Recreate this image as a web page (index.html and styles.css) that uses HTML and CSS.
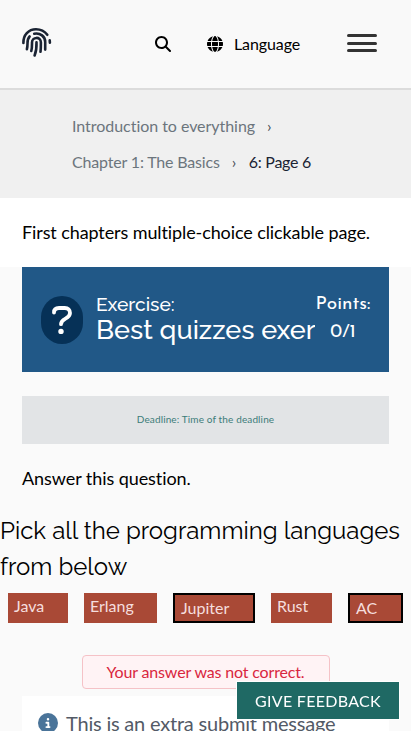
FILE: index.html
```html
<!DOCTYPE html>
<html lang="en">
<head>
<meta charset="utf-8">
<meta name="viewport" content="width=device-width, initial-scale=1">
<title>6: Page 6</title>
<link rel="stylesheet" href="styles.css">
</head>
<body>
<header class="topbar">
  <svg class="logo" viewBox="21 27 31 31" fill="none" stroke="#1a2333" stroke-width="2.6" stroke-linecap="round">
    <path d="M23.400 43C23.200 35 28.500 29.300 36 29.300c4.800 0 8.700 2.100 11.300 5.500M49.700 40.300l.2 2.300"/>
    <path d="M34.200 33.700c6.200-1.200 11 2.900 11 8.300v7.600M29.600 36.500c-2.200 2.200-2.100 4.500-2.100 7.200 0 2-.2 3.700-.6 5.600M31.300 51c.8-3 .7-5.500.7-8.500 0-6 8.800-6.200 8.900 0 0 3.400 0 6.200-.4 9.300M36.500 42.300c.2 5-.2 9-1.900 13.200"/>
  </svg>
  <svg class="search" viewBox="0 0 512 512"><path d="M416 208c0 45.9-14.9 88.3-40 122.7L502.6 457.4c12.5 12.5 12.5 32.8 0 45.3s-32.8 12.5-45.3 0L330.7 376c-34.4 25.2-76.8 40-122.7 40C93.1 416 0 322.9 0 208S93.1 0 208 0S416 93.1 416 208zM208 352a144 144 0 1 0 0-288 144 144 0 1 0 0 288z"/></svg>
  <svg class="globe" viewBox="0 0 512 512"><path d="M352 256c0 22.2-1.2 43.6-3.3 64H163.3c-2.2-20.4-3.3-41.8-3.3-64s1.2-43.6 3.3-64H348.7c2.2 20.4 3.3 41.8 3.3 64zm28.8-64H503.9c5.3 20.5 8.1 41.9 8.1 64s-2.8 43.5-8.1 64H380.8c2.1-20.6 3.2-42 3.2-64s-1.1-43.4-3.2-64zm112.6-32H376.7c-10-63.9-29.8-117.4-55.3-151.6c78.3 20.7 142 77.5 171.9 151.6zm-149.1 0H167.7c6.1-36.4 15.5-68.6 27-94.7c10.5-23.6 22.2-40.7 33.5-51.5C239.4 3.2 248.7 0 256 0s16.6 3.2 27.8 13.8c11.3 10.8 23 27.9 33.5 51.5c11.6 26 20.9 58.2 27 94.7zm-209 0H18.6C48.6 85.9 112.2 29.1 190.6 8.4C165.1 42.6 145.3 96.1 135.3 160zM8.1 192H131.2c-2.1 20.6-3.2 42-3.2 64s1.1 43.4 3.2 64H8.1C2.8 299.5 0 278.1 0 256s2.8-43.5 8.1-64zM194.7 446.6c-11.6-26-20.9-58.2-27-94.6H344.3c-6.1 36.4-15.5 68.6-27 94.6c-10.5 23.6-22.2 40.7-33.5 51.5C272.6 508.8 263.3 512 256 512s-16.6-3.2-27.8-13.8c-11.3-10.8-23-27.9-33.5-51.5zM135.3 352c10 63.9 29.8 117.4 55.3 151.6C112.2 482.9 48.6 426.1 18.6 352H135.3zm358.1 0c-30 74.1-93.6 130.9-171.9 151.6c25.5-34.2 45.2-87.7 55.3-151.6H493.4z"/></svg>
  <span class="language">Language</span>
  <div class="burger"><i></i><i></i><i></i></div>
</header>
<nav class="crumbs">
  <div class="crumb-row"><a class="course">Introduction to everything</a><span class="sep">›</span></div>
  <div class="crumb-row"><a class="chapter">Chapter 1: The Basics</a><span class="sep">›</span><a class="current">6: Page 6</a></div>
</nav>
<main>
  <p class="intro">First chapters multiple-choice clickable page.</p>
  <section class="exercise">
    <svg class="question" viewBox="0 0 42 48"><rect width="42" height="48" rx="21" fill="#063157"/><path d="M13 16.600c0-3 2-4.600 5-4.600h5.800c3.300 0 5.200 2.200 5.200 5 0 6.500-9 4.700-9 11.200" fill="none" stroke="#fff" stroke-width="3.8" stroke-linecap="round"/><circle cx="20" cy="35.4" r="2.7" fill="#fff"/></svg>
    <h2 class="title"><span class="kicker">Exercise:</span><span class="name">Best quizzes exer</span></h2>
    <div class="points"><span class="points-label">Points:</span><span class="points-value">0/1</span></div>
  </section>
  <div class="deadline">Deadline: Time of the deadline</div>
  <p class="answer">Answer this question.</p>
  <h3 class="prompt"><span>Pick all the programming languages</span> <span>from below</span></h3>
  <div class="options">
    <button class="java">Java</button>
    <button class="erlang">Erlang</button>
    <button class="jupiter selected">Jupiter</button>
    <button class="rust">Rust</button>
    <button class="ac selected">AC</button>
  </div>
  <div class="result">Your answer was not correct.</div>
  <div class="message">
    <svg class="info" viewBox="0 0 512 512"><circle cx="256" cy="256" r="256" fill="#4a7499"/><path fill="#fff" d="M216 336h24v-64h-24c-13.300 0-24-10.700-24-24s10.700-24 24-24h48c13.300 0 24 10.700 24 24v88h8c13.300 0 24 10.700 24 24s-10.700 24-24 24h-80c-13.300 0-24-10.700-24-24s10.700-24 24-24zM256 128a32 32 0 1 1 0 64 32 32 0 1 1 0-64z"/></svg>
    <span>This is an extra submit message</span>
  </div>
</main>
<button class="feedback">GIVE FEEDBACK</button>
</body>
</html>
```
FILE: styles.css
```css
* { box-sizing: border-box; }
html { height: 100%; overflow: hidden; }
body { margin: 0; height: 731px; overflow: hidden; background: #fafafa; color: #000; font: 18px/29px Lato, sans-serif; }
p, h2, h3 { margin: 0; font-weight: 400; }
button { font-family: Lato, sans-serif; }
svg { display: block; flex: none; }
.topbar { display: flex; align-items: center; height: 90px; padding: 0 34px 4px 21px; border-bottom: 2px solid #dcdcdc; background: #f9f9f9; }
.logo { width: 31px; height: 31px; margin-top: 1px; }
.search { width: 16px; height: 16px; margin: 4px 0 0 103px; }
.globe { width: 16px; height: 16px; margin: 4px 11px 0 36px; }
.language { margin-top: 3px; font-size: 16px; letter-spacing: -.1px; }
.burger { display: flex; flex-direction: column; gap: 4.500px; width: 30px; margin: 2px 0 0 auto; }
.burger i { height: 3px; border-radius: 2px; background: #333; }
.crumbs { height: 108px; padding: 18px 72px; background: #f0f0f0; color: #6c757d; font-size: 16px; line-height: 36px; }
.crumb-row { display: flex; white-space: nowrap; }
.course { letter-spacing: -.04px; }
.chapter { letter-spacing: -.17px; }
.sep { width: 29px; padding-left: 12px; color: #495057; }
.current { color: #1a2333; letter-spacing: -.28px; }
.intro { height: 69px; padding: 20px 22px; background: #fff; letter-spacing: -.1px; }
.exercise { display: flex; align-items: center; height: 105px; margin: 0 22px; padding: 0 18px 0 19px; background: #215887; color: #fff; }
.question { width: 42px; height: 48px; margin-top: 1px; }
.title { width: 219px; margin: 0 0 1px 13px; overflow: hidden; font-family: Raleway, "Open Sans", sans-serif; white-space: nowrap; }
.kicker, .name { display: block; }
.kicker { font-size: 19.200px; font-weight: 500; line-height: 22px; }
.name { font-size: 27px; font-weight: 500; line-height: 29px; padding-bottom: 1px; }
.points { display: flex; flex-direction: column; align-items: center; width: 56px; margin-bottom: 2px; }
.points-label { font: 400 19px/28px "Josefin Sans", Lato, sans-serif; }
.points-value { font: 400 19px/28px "Josefin Sans", Lato, sans-serif; }
.deadline { height: 48px; margin: 24px 22px 0; background: #e2e4e6; color: #3c7c79; font-size: 10px; line-height: 47px; letter-spacing: .13px; text-align: center; }
.answer { margin: 20px 22px 0; letter-spacing: -.07px; }
.prompt { margin-top: 20px; font: 400 24px/36px Raleway, "Open Sans", sans-serif; white-space: nowrap; }
.prompt span { display: block; }
.options { display: flex; gap: 16px; margin: 8px 8px 0; }
.options button { display: flex; align-items: flex-start; height: 30px; padding: 2px 6px; border: 0; background: #a94936; color: #f5dede; font-size: 16px; line-height: 21px; }
.options .selected { border: 2px solid #000; }
.java { width: 60px; }
.erlang { width: 73px; }
.jupiter { width: 82px; }
.rust { width: 61px; }
.ac { width: 55px; }
.result { width: 248px; height: 34px; margin: 32px auto 0; border: 1px solid #f5c2c7; border-radius: 4px; background: #fff3f5; color: #d9263e; font-size: 16px; line-height: 32px; letter-spacing: -.16px; text-align: center; }
.message { display: flex; gap: 8px; height: 54px; margin: 7px 22px 0; padding: 12px 16px; background: #fff; color: #535a66; font-size: 20px; line-height: 30px; letter-spacing: -.2px; white-space: nowrap; }
.info { width: 20px; height: 20px; margin-top: 5px; }
.feedback { position: fixed; right: 12px; bottom: 12px; width: 162px; height: 37px; padding: 0; border: 0; background: #1f6964; box-shadow: 0 0 0 1px #fff; color: #fff; font-size: 16px; letter-spacing: .3px; }
```
